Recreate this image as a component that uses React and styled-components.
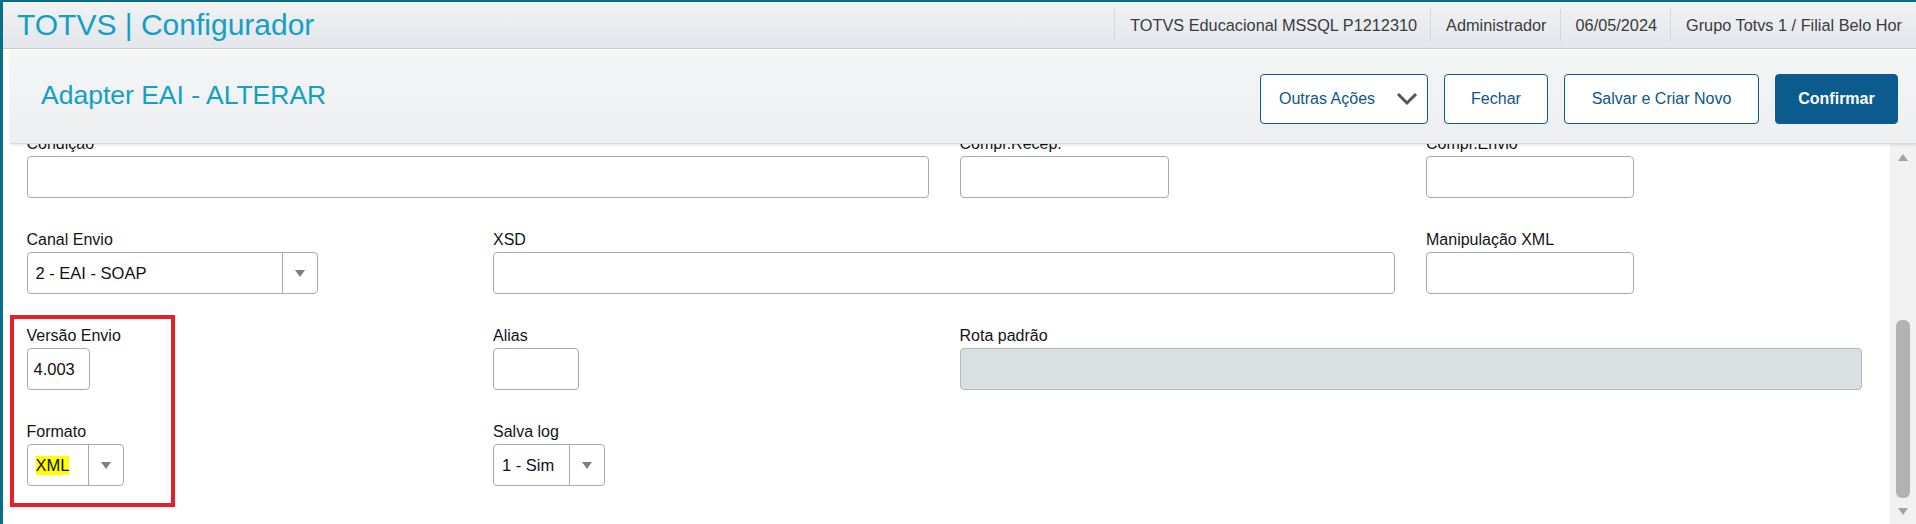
import React from 'react';
import styled, { createGlobalStyle } from 'styled-components';

const GlobalStyle = createGlobalStyle`
    body {
        margin: 0;
        font-family: "Liberation Sans", Arial, sans-serif;
        background: #ffffff;
    }
`;

const fields = [
    { label: 'Condição', span: 2 },
    { label: 'Compr.Recep.', width: 209 },
    { label: 'Compr.Envio', width: 208 },
    { label: 'Canal Envio', width: 291, select: true, value: '2 - EAI - SOAP' },
    { label: 'XSD', span: 2 },
    { label: 'Manipulação XML', width: 208 },
    { label: 'Versão Envio', width: 63, value: '4.003' },
    { label: 'Alias', width: 86 },
    { label: 'Rota padrão', span: 2, disabled: true },
    { label: 'Formato', width: 97, select: true, value: 'XML', marked: true },
    { label: 'Salva log', width: 112, select: true, value: '1 - Sim' }
];

const infos = ['TOTVS Educacional MSSQL P1212310', 'Administrador', '06/05/2024', 'Grupo Totvs 1 / Filial Belo Hor'];

function App() {
    return (
        <>
            <GlobalStyle />
            <Frame>
                <Header>
                    <AppTitle>TOTVS | Configurador</AppTitle>
                    <InfoList>
                        {infos.map((info) => (
                            <InfoItem key={info}>{info}</InfoItem>
                        ))}
                    </InfoList>
                </Header>

                <ActionBar>
                    <PageTitle>Adapter EAI - ALTERAR</PageTitle>
                    <Buttons>
                        <Button $w={168} $left>
                            Outras Ações
                            <svg width='22' height='14' viewBox='0 0 22 14'>
                                <path d='M2 2 L11 11 L20 2' fill='none' stroke='#555' strokeWidth='3' />
                            </svg>
                        </Button>
                        <Button $w={104}>Fechar</Button>
                        <Button $w={195}>Salvar e Criar Novo</Button>
                        <Button $w={123} $primary>
                            Confirmar
                        </Button>
                    </Buttons>
                </ActionBar>

                <FormArea>
                    <Content>
                        <Grid>
                            {fields.map((f) => (
                                <Field key={f.label} $span={f.span}>
                                    <Label>{f.label}</Label>
                                    {f.select ? (
                                        <SelectBox $w={f.width}>
                                            <SelectValue>
                                                {f.marked ? <Marked>{f.value}</Marked> : f.value}
                                            </SelectValue>
                                            <SelectArrow>
                                                <svg width='10' height='7' viewBox='0 0 10 7'>
                                                    <path d='M0 0 L10 0 L5 7 Z' fill='#7b8086' />
                                                </svg>
                                            </SelectArrow>
                                        </SelectBox>
                                    ) : (
                                        <TextInput
                                            $w={f.width}
                                            disabled={f.disabled}
                                            readOnly
                                            value={f.value || ''}
                                        />
                                    )}
                                </Field>
                            ))}
                        </Grid>
                    </Content>
                    <ScrollTrack>
                        <ScrollArrow>
                            <svg width='10' height='7' viewBox='0 0 10 7'>
                                <path d='M0 7 L10 7 L5 0 Z' fill='#a3a3a3' />
                            </svg>
                        </ScrollArrow>
                        <ScrollThumb />
                        <ScrollArrow>
                            <svg width='10' height='7' viewBox='0 0 10 7'>
                                <path d='M0 0 L10 0 L5 7 Z' fill='#a3a3a3' />
                            </svg>
                        </ScrollArrow>
                    </ScrollTrack>
                    <Highlight />
                </FormArea>
            </Frame>
        </>
    );
}

const Frame = styled.div`
    width: 1916px;
    height: 524px;
    box-sizing: border-box;
    border-top: 2px solid #0b6d86;
    border-left: 3px solid #0b6d86;
    display: flex;
    flex-direction: column;
    overflow: hidden;
    background: #ffffff;
`;

const Header = styled.header`
    height: 46px;
    flex-shrink: 0;
    display: flex;
    align-items: center;
    padding-left: 14px;
    background: linear-gradient(#f0f2f4, #e3e6ea);
    border-bottom: 1px solid #c6cbd0;
`;

const AppTitle = styled.h1`
    margin: 0;
    font-size: 30px;
    font-weight: normal;
    color: #139fc6;
    white-space: nowrap;
`;

const InfoList = styled.div`
    margin-left: auto;
    padding-right: 1px;
    display: flex;
    align-items: center;
`;

const InfoItem = styled.span`
    height: 32px;
    line-height: 32px;
    padding: 0 13px 0 15px;
    border-left: 1px solid #d3d7db;
    font-size: 16.3px;
    color: #3b3b3b;
    white-space: nowrap;
`;

const ActionBar = styled.div`
    height: 93px;
    flex-shrink: 0;
    margin: 1px 0 0 7px;
    padding: 0 18px 0 31px;
    display: flex;
    align-items: center;
    background: linear-gradient(#f4f6f6, #eceef0);
    border-bottom: 1px solid #d5d9dc;
    box-shadow: 0 1px 2px rgba(0, 0, 0, 0.12);
    position: relative;
    z-index: 1;
`;

const PageTitle = styled.h2`
    margin: 0 0 2px 0;
    font-size: 26.5px;
    font-weight: normal;
    color: #139fc6;
`;

const Buttons = styled.div`
    margin-left: auto;
    margin-top: 4px;
    display: flex;
    gap: 16px;
`;

const Button = styled.button`
    width: ${(p) => p.$w}px;
    height: 50px;
    box-sizing: border-box;
    display: flex;
    align-items: center;
    justify-content: ${(p) => (p.$left ? 'space-between' : 'center')};
    padding: ${(p) => (p.$left ? '0 9px 0 18px' : '0')};
    border: 1.5px solid #0d5c8c;
    border-radius: 4px;
    background: ${(p) => (p.$primary ? '#0b5b8e' : '#ffffff')};
    color: ${(p) => (p.$primary ? '#ffffff' : '#0d5687')};
    font-family: "Liberation Sans", Arial, sans-serif;
    font-size: 16px;
    font-weight: ${(p) => (p.$primary ? 'bold' : 'normal')};
`;

const FormArea = styled.div`
    flex: 1;
    display: flex;
    overflow: hidden;
    position: relative;
`;

const Content = styled.div`
    flex: 1;
    padding-left: 23.5px;
`;

const Grid = styled.div`
    margin-top: -10px;
    display: grid;
    grid-template-columns: repeat(4, 435.5px);
    column-gap: 31px;
    row-gap: 32px;
`;

const Field = styled.div`
    grid-column: span ${(p) => p.$span || 1};
    display: flex;
    flex-direction: column;
`;

const Label = styled.label`
    height: 20px;
    line-height: 20px;
    margin-bottom: 2px;
    font-size: 16px;
    color: #141414;
    white-space: nowrap;
`;

const TextInput = styled.input`
    width: ${(p) => (p.$w ? `${p.$w}px` : '100%')};
    height: 42px;
    box-sizing: border-box;
    margin: 0;
    padding: 0 6px;
    border: 1px solid #a4aaad;
    border-radius: 4px;
    background: #ffffff;
    font-family: "Liberation Sans", Arial, sans-serif;
    font-size: 16.5px;
    color: #111111;
    outline: none;

    &:disabled {
        background: #dadfe0;
        border-color: #b3b9bc;
    }
`;

const SelectBox = styled.div`
    width: ${(p) => p.$w}px;
    height: 42px;
    box-sizing: border-box;
    display: flex;
    border: 1px solid #a4aaad;
    border-radius: 4px;
    background: #ffffff;
`;

const SelectValue = styled.div`
    flex: 1;
    display: flex;
    align-items: center;
    padding-left: 8px;
    font-size: 16.5px;
    color: #111111;
    white-space: nowrap;
`;

const Marked = styled.span`
    background: #ffff00;
`;

const SelectArrow = styled.div`
    width: 34px;
    display: flex;
    align-items: center;
    justify-content: center;
    border-left: 1px solid #a4aaad;
`;

const ScrollTrack = styled.div`
    width: 26px;
    flex-shrink: 0;
    display: flex;
    flex-direction: column;
    align-items: center;
    background: #f1f1f1;
`;

const ScrollArrow = styled.div`
    height: 26px;
    display: flex;
    align-items: center;
    justify-content: center;
`;

const ScrollThumb = styled.div`
    width: 14px;
    height: 178px;
    margin-top: auto;
    border-radius: 6px;
    background: #b2b2b2;
`;

const Highlight = styled.div`
    position: absolute;
    left: 7px;
    top: 171px;
    width: 165px;
    height: 192px;
    box-sizing: border-box;
    border: 4px solid #e5202a;
    pointer-events: none;
`;

export default App;
